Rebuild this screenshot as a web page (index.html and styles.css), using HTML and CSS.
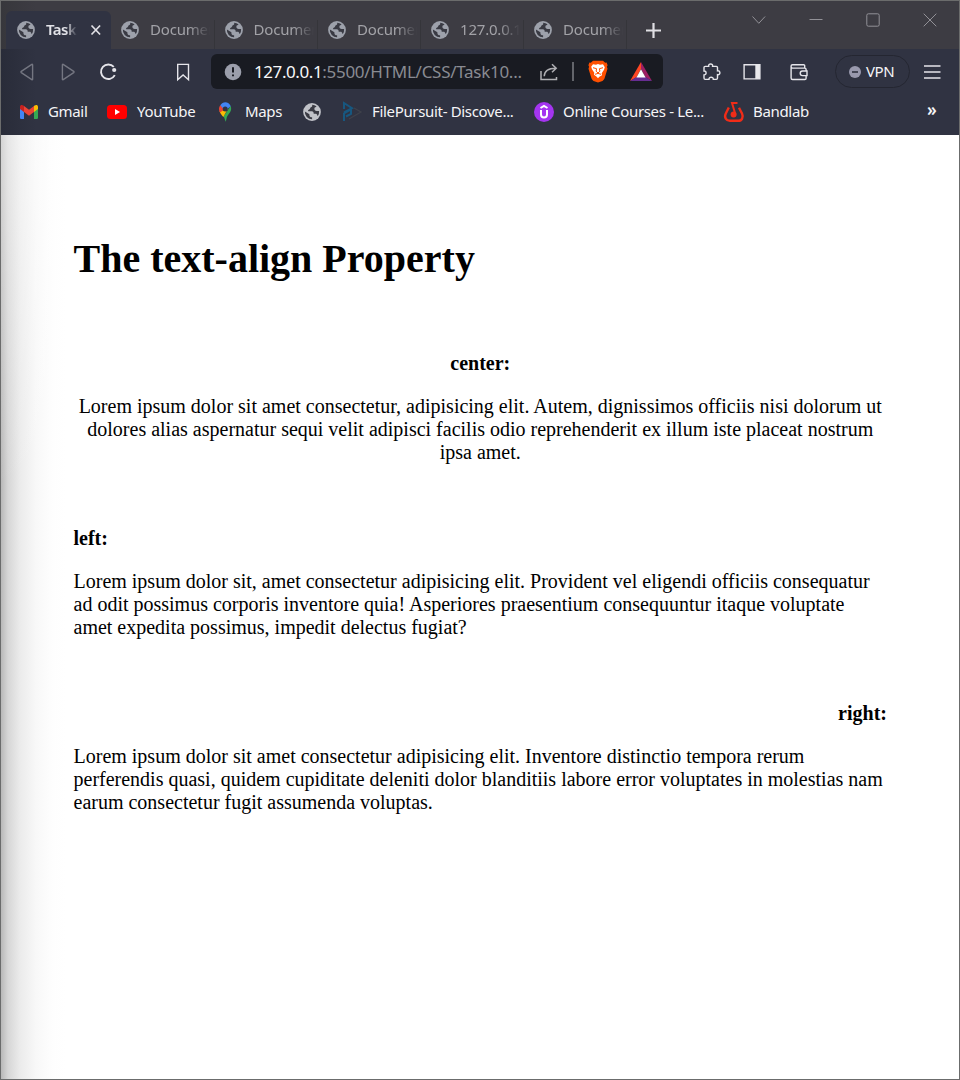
FILE: index.html
```html
<!DOCTYPE html>
<html lang="en">
<head>
<meta charset="utf-8">
<title>Task</title>
<link rel="stylesheet" href="styles.css">
</head>
<body>
<svg class="defs" width="0" height="0" aria-hidden="true">
  <symbol id="globe" viewBox="0 0 18 18">
    <circle cx="9" cy="9" r="8.9" fill="currentColor"/>
    <path class="land" d="M9.1 1.8c.5 1.5-.1 2.4-1.6 2.6-.5 1.6-1.3 2.3-2.4 2.5l.1 1.4h3.6c1.5 0 1.9.9 1.9 2.4h1.8c1 0 1.6.5 1.7 1.5l.6.7A7.2 7.2 0 0 0 16.1 8l-2.4-.1c-1.6 0-2.3-.8-2.3-2.1 0-1 .5-1.6 1.6-1.8l.5-.7A7.2 7.2 0 0 0 9.1 1.8zM1.9 8.4a7.1 7.1 0 0 0 7.2 7.8v-2c-1.8 0-2.7-.8-2.7-2.3v-.6z"/>
  </symbol>
</svg>
<div class="window">
  <header class="chrome">
    <div class="titlebar">
      <nav class="tabs">
        <div class="tab active"><svg class="globe"><use href="#globe"/></svg><span class="tab-title">Task</span><svg class="close" viewBox="0 0 12 12"><path d="M1.5 1.5l8.6 9M10.1 1.5l-8.6 9"/></svg></div>
        <div class="tab"><svg class="globe"><use href="#globe"/></svg><span class="tab-title">Document</span></div>
        <div class="tab"><svg class="globe"><use href="#globe"/></svg><span class="tab-title">Document</span></div>
        <div class="tab"><svg class="globe"><use href="#globe"/></svg><span class="tab-title">Document</span></div>
        <div class="tab"><svg class="globe"><use href="#globe"/></svg><span class="tab-title">127.0.0.1</span></div>
        <div class="tab"><svg class="globe"><use href="#globe"/></svg><span class="tab-title">Document</span></div>
        <svg class="new-tab" viewBox="0 0 15 15"><path d="M7.5 0v15M0 7.5h15"/></svg>
      </nav>
      <div class="controls">
        <svg viewBox="0 0 14 14"><path d="M.5 3.5l6.3 6.8 6.3-6.8"/></svg>
        <svg viewBox="0 0 14 14"><path d="M.5 6.5h13"/></svg>
        <svg viewBox="0 0 14 14"><rect x=".8" y=".8" width="12.4" height="12.4" rx="1.5"/></svg>
        <svg viewBox="0 0 14 14"><path d="M.7.7l12.6 12.6M13.3.7L.7 13.3"/></svg>
      </div>
    </div>

    <div class="toolbar">
      <svg class="tool dim" viewBox="0 0 20 20"><path d="M14.6 2.8v14.4q0 .8-.8.4L3.3 10.6q-.7-.6 0-1.2L13.8 2.4q.8-.4.8.4z"/></svg>
      <svg class="tool dim" viewBox="0 0 20 20"><path d="M4.4 2.8v14.4q0 .8.8.4l10.5-7q.7-.6 0-1.2L5.2 2.4q-.8-.4-.8.4z"/></svg>
      <svg class="tool reload" viewBox="0 0 20 20"><path d="M16.8 13.1a7.3 7.3 0 1 1-1-8.2"/><circle cx="16.2" cy="8" r="2.1"/></svg>
      <svg class="tool mark" viewBox="0 0 20 20"><path d="M4.7 2.4h10.8v15.4L10.1 13l-5.4 4.8z"/></svg>
      <div class="address">
        <svg class="info" viewBox="0 0 18 18"><circle cx="9" cy="9" r="8.3"/><path d="M9 4.3v5.3M9 11.5v1.8"/></svg>
        <span class="url"><b>127.0.0.1</b>:5500/HTML/CSS/Task10...</span>
        <svg class="share" viewBox="0 0 18 18"><path d="M1 8v8.5h15.5V14M4.2 13.3c.2-5 3.3-8 11.5-8M12 1.2l4.2 4.1-4.2 4"/></svg>
        <i class="divider"></i>
        <svg class="brave" viewBox="0 0 20 23"><path fill="#ff5000" d="M5 .7h10l2.2 2 1.4-.1 1 2.6-.7 1.600.6 2-3 9.800q-.6 1.500-2 2.400L10 22.500 5.500 21q-1.400-.9-2-2.400l-3-9.800.6-2-.7-1.600 1-2.600 1.400.1z"/><path fill="#fff" d="M5 4.200l3 .5 2-.6 2 .6 3-.5 1.800 3-.8 2.500-2.300 3.600.3 1.900-2.700 1.500-1.300 1.500-1.300-1.500L6 14.700l.3-1.900L4 9.200l-.8-2.500z"/><path fill="none" stroke="#ff5000" stroke-width="1" d="M5 7.700l3.600 1-.5 2.500L10 13l1.900-1.800-.5-2.500 3.600-1M7 14.300l3-.9 3 .9"/></svg>
        <svg class="bat" viewBox="0 0 22 20"><path fill="#ff4724" d="M11 0L0 19l6.500-3.700L11 7z"/><path fill="#9e1f63" d="M11 0l11 19-6.500-3.700L11 7z"/><path fill="#662d91" d="M0 19h22l-6.500-4h-9z"/><path fill="#fff" d="M11 7.200l4.600 8.300H6.400z"/></svg>
      </div>
      <svg class="tool puzzle" viewBox="0 0 20 20"><path d="M3.200 4.400h3.500c-.7-3.200 4.600-3.200 3.900 0h3.700q1.200 0 1.200 1.200v3.200c3.200-.7 3.200 4.600 0 3.900v3.400q0 1.300-1.200 1.300h-3c.4-2.900-4.700-2.900-4.300 0H3.200q-1.200 0-1.200-1.300v-3.200c2.800.2 2.800-4.100 0-3.900V5.600q0-1.200 1.200-1.200z"/></svg>
      <svg class="tool sidebar" viewBox="0 0 20 20"><path d="M2.100 2.700h15.800v14.200H2.100z"/><path d="M13.300 2.700h4.600v14.200h-4.600z" fill="#e8e8eb" stroke="none"/></svg>
      <svg class="tool wallet" viewBox="0 0 20 20"><path d="M15.700 5.800V3.700q0-1-1-1H3.500q-1.400 0-1.400 1.400V16q0 1.500 1.500 1.500h12.200q1.300 0 1.300-1.300v-2.600M2.100 4.500q0 1.600 1.600 1.600h12q1.400 0 1.400 1.400v1.600M18 9h-4.500q-2.300 0-2.300 2.300t2.300 2.300H18z"/></svg>
      <div class="vpn"><svg viewBox="0 0 12 12"><circle cx="6" cy="6" r="6"/><path d="M3 6h6"/></svg><span>VPN</span></div>
      <svg class="tool menu" viewBox="0 0 20 20"><path d="M2 4h16.500M2 10h16.500M2 16h16.500"/></svg>
    </div>

    <nav class="bookmarks">
      <div class="bookmark gmail"><svg viewBox="0 0 20 20"><path fill="#4285f4" d="M1 5l4 3v9H2.200Q1 17 1 16z"/><path fill="#34a853" d="M15 8l4-3v11q0 1-1.200 1H15z"/><path fill="#c5221f" d="M1 7V5c0-2 2-2.400 3.400-1.400L5 4v6z"/><path fill="#fbbc04" d="M15 10V4l.6-.4C17 2.600 19 3 19 5v2z"/><path fill="#ea4335" d="M5 4l5 3.800L15 4v6l-5 3.700L5 10z"/></svg><span>Gmail</span></div>
      <div class="bookmark youtube"><svg viewBox="0 0 20 20"><rect y="3" width="20" height="14" rx="3.500" fill="#f00"/><path fill="#fff" d="M8 7l5 3-5 3z"/></svg><span>YouTube</span></div>
      <div class="bookmark maps"><svg viewBox="0 0 20 20"><path fill="#34a853" d="M14.600 4.100c1.400 3.600-.1 6.200-2.400 8.700-1.700 2-1.500 3.700-2.400 7-.8-1.200-.9-3.200-2.300-5.200z"/><path fill="#fbbc04" d="M3.500 9l8.300-1.900-4.500 8C5.500 12.500 4.200 11.500 3.500 9z"/><path fill="#ea4335" d="M4.300 3.200L9 7 4.100 10.500C2.500 8 2.600 5.400 4.300 3.200z"/><path fill="#4285f4" d="M4.300 3.200C7-1.200 13-.5 14.700 4.200L9 9z"/><circle cx="9.200" cy="7" r="2.500" fill="#303342"/></svg><span>Maps</span></div>
      <div class="bookmark blank"><svg class="globe"><use href="#globe"/></svg></div>
      <div class="bookmark filepursuit"><svg viewBox="0 0 20 20"><path fill="none" stroke="#17577f" stroke-width="2" d="M2 7V1l8 5.200-8 4.300M2 19v-7.500l7-4V12l-5 2.500"/><path fill="none" stroke="#3f424b" stroke-width="1.200" d="M12 6l7 4-12 7"/></svg><span>FilePursuit- Discove...</span></div>
      <div class="bookmark courses"><svg viewBox="0 0 20 20"><circle cx="10" cy="10" r="10" fill="#a435f0"/><path fill="none" stroke="#fff" stroke-width="2" d="M6.500 6L10 3.900 13.500 6M7 8v4.500c0 4 6 4 6 0V8"/></svg><span>Online Courses - Le...</span></div>
      <div class="bookmark bandlab"><svg viewBox="0 0 20 20"><path fill="none" stroke="#f12c18" stroke-width="2.400" stroke-linejoin="round" d="M4.800 5.500L1.800 11.500c-2 4 .5 7.300 4 7.300h8.500c3.500 0 5.500-3.500 3.700-7.300l-3-5.800"/><path fill="none" stroke="#f12c18" stroke-width="2" d="M13.500 1H8l3.300 11"/><circle cx="9.600" cy="12.400" r="3" fill="#f12c18"/></svg><span>Bandlab</span></div>
      <span class="more">»</span>
    </nav>
  </header>

  <main class="page">
    <h1>The text-align Property</h1>
    <section class="center"><h4>center:</h4><p>Lorem ipsum dolor sit amet consectetur, adipisicing elit. Autem, dignissimos officiis nisi dolorum ut dolores alias aspernatur sequi velit adipisci facilis odio reprehenderit ex illum iste placeat nostrum ipsa amet.</p></section>
    <section class="left"><h4>left:</h4><p>Lorem ipsum dolor sit, amet consectetur adipisicing elit. Provident vel eligendi officiis consequatur ad odit possimus corporis inventore quia! Asperiores praesentium consequuntur itaque voluptate amet expedita possimus, impedit delectus fugiat?</p></section>
    <section class="right"><h4>right:</h4><p>Lorem ipsum dolor sit amet consectetur adipisicing elit. Inventore distinctio tempora rerum perferendis quasi, quidem cupiditate deleniti dolor blanditiis labore error voluptates in molestias nam earum consectetur fugit assumenda voluptas.</p></section>
  </main>
</div>
</body>
</html>
```
FILE: styles.css
```css
* { box-sizing: border-box; }
body { margin: 0; }
svg { display: block; flex: none; overflow: visible; }
.defs { position: absolute; }
.window {
  display: flex;
  flex-direction: column;
  width: 960px;
  height: 1080px;
  border: 1px solid #6b6c6c;
  overflow: hidden;
  background: #fff;
}
.chrome {
  height: 134px;
  background: linear-gradient(90deg, #292c39, #303342 35px);
  font-family: "Noto Sans", "Open Sans", sans-serif;
  font-size: 15px;
  color: #f5f5f7;
  white-space: nowrap;
}

/* Tab strip */
.titlebar {
  display: flex;
  justify-content: space-between;
  height: 48px;
  background: linear-gradient(90deg, #37373c, #3d3c43 35px);
}
.tabs { display: flex; padding: 10px 0 0 5px; }
.tab {
  display: flex;
  align-items: center;
  width: 103px;
  height: 38px;
  padding-left: 10px;
  color: #a2a2a7;
  position: relative;
  letter-spacing: -0.2px;
}
.tab:not(.active)::after {
  content: "";
  position: absolute;
  right: 0;
  top: 9px;
  width: 1px;
  height: 29px;
  background: #35353a;
}
.tab.active {
  width: 105px;
  padding-left: 11px;
  background: #303342;
  border-radius: 6px 6px 0 0;
  color: #e2e3e8;
  font-weight: 600;
  letter-spacing: -0.5px;
}
.tab:nth-child(2), .tab:nth-child(3) { width: 103.5px; }
.globe { width: 18px; height: 18px; color: #9da1ab; }
.land { fill: #393a43; }
.tab-title {
  width: 60px;
  margin: 0 0 2px 11px;
  overflow: hidden;
  -webkit-mask-image: linear-gradient(90deg, #000 65%, transparent);
  mask-image: linear-gradient(90deg, #000 65%, transparent);
}
.active .tab-title { width: 31px; }
.close { width: 12px; height: 12px; margin-left: 13px; fill: none; stroke: #e0e0e5; stroke-width: 1.7; }
.new-tab { width: 15px; height: 15px; margin: 12px 0 0 19px; stroke: #e0dfe4; stroke-width: 2.2; }
.controls { display: flex; gap: 43px; padding: 12px 22px 0 0; }
.controls svg { width: 14px; height: 14px; fill: none; stroke: #929197; stroke-width: 1; }

/* Navigation toolbar */
.toolbar {
  display: grid;
  grid-template-columns: 40px 40px 41px 72px 452px 55px 40px 77px 74px 33px;
  align-items: center;
  height: 45px;
  padding-left: 17px;
}
.tool { width: 20px; height: 20px; fill: none; stroke: #e5e5ea; stroke-width: 1.4; }
.dim { stroke: #747681; }
.reload { stroke-width: 1.9; }
.reload circle { fill: #e5e5ea; stroke: none; }
.mark { justify-self: start; margin-left: 34px; }
.puzzle, .sidebar, .wallet, .menu { justify-self: end; }
.puzzle, .sidebar { margin-right: -4px; }
.wallet { margin-right: 26px; }
.address {
  display: flex;
  align-items: center;
  height: 35px;
  padding-left: 13px;
  border-radius: 6px;
  background: #191b22;
}
.info { width: 18px; height: 18px; fill: #9b9eab; stroke: #191b22; stroke-width: 2; }
.info circle { stroke: none; }
.url { width: 276px; margin-left: 12px; color: #898b92; font-size: 17px; letter-spacing: -0.28px; }
.url b { color: #f8f8fa; font-weight: 400; letter-spacing: -0.42px; }
.share { width: 18px; height: 18px; margin-left: 10px; fill: none; stroke: #afafb3; stroke-width: 1.5; }
.divider { width: 2px; height: 19px; margin: 0 14px; background: #63656b; }
.brave { width: 20px; height: 23px; }
.bat { width: 22px; height: 20px; margin-left: 22px; }
.vpn {
  display: flex;
  align-items: center;
  gap: 5px;
  width: 75px;
  height: 33px;
  padding-left: 13px;
  border: 1px solid #242631;
  border-radius: 17px;
  letter-spacing: -0.4px;
}
.vpn svg { width: 12px; height: 12px; fill: #9999ad; stroke: #292b39; stroke-width: 1.5; }
.vpn circle { stroke: none; }
.vpn span { margin-bottom: 2px; }

/* Bookmarks bar */
.bookmarks { display: flex; align-items: center; height: 35px; padding-left: 18px; letter-spacing: -0.33px; }
.bookmark { display: flex; align-items: center; gap: 9px; flex: none; }
.bookmark span { margin-bottom: 1px; }
.bookmark > svg:not(.globe) { width: 20px; height: 20px; }
.bookmark .globe { color: #c0c2c8; }
.gmail { width: 88px; }
.youtube { width: 109px; gap: 10px; }
.maps { width: 87px; }
.blank { width: 39px; }
.filepursuit { width: 192px; gap: 10px; }
.courses { width: 190px; }
.bandlab { width: 203px; }
.more { font-size: 17px; font-weight: 600; transform: translateY(-2px); }

/* Document */
.page {
  flex: 1;
  padding: 101px 72px 0 72.5px;
  font: 20px/23px "Liberation Serif", "Times New Roman", serif;
  color: #000;
  background:
    linear-gradient(180deg, rgba(255,255,255,.4), transparent 350px),
    linear-gradient(90deg, #b8b8b8, #d6d6d6 7px, #ebebeb 19px, #f8f8f8 35px, #fefefe 52px, #fff 65px);
}
h1 { margin: 0 0 70px; font-size: 40px; line-height: 46px; }
h4 { margin: 0 0 20px; font-size: 20px; }
p { margin: 0; }
section { margin-bottom: 63px; }
.center { text-align: center; }
.right h4 { text-align: right; }
```
